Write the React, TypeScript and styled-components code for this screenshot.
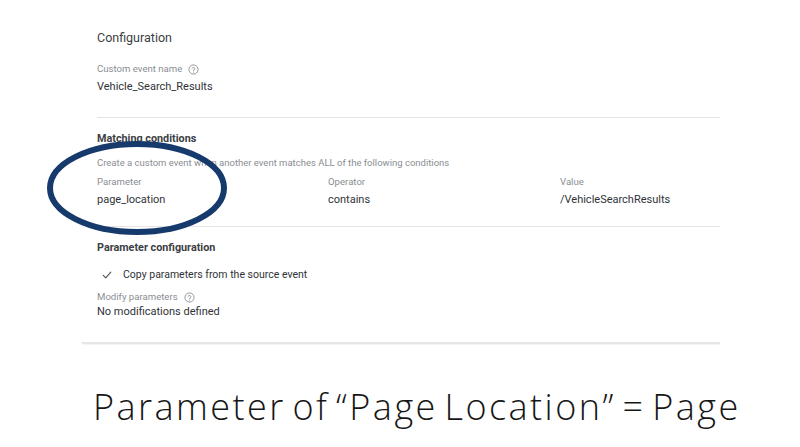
import React from "react";
import styled, { createGlobalStyle } from "styled-components";

const Global = createGlobalStyle`
  html, body { margin: 0; padding: 0; background: #ffffff; }
  body { width: 800px; height: 447px; overflow: hidden; font-family: Roboto, "Liberation Sans", Arial, sans-serif; }
`;

const Page = styled.div`
  position: relative;
  width: 800px;
  height: 447px;
  display: flex;
  flex-direction: column;
`;

const Card = styled.div`
  margin-left: 82px;
  width: 638px;
  padding: 30px 0 0 15px;
  box-sizing: border-box;
  border-bottom: 2px solid #e6e6e6;
  box-shadow: 0 1px 1px rgba(0,0,0,0.04);
`;

const Title = styled.div`
  font-size: 12.5px;
  line-height: 16px;
  color: #3c4043;
  margin-bottom: 17px;
`;

const Label = styled.div<{ $mt?: number }>`
  display: flex;
  align-items: center;
  gap: 6px;
  font-size: 9.6px;
  line-height: 12px;
  color: #8a8e93;
  margin-top: ${(p) => p.$mt ?? 0}px;
`;

const Value = styled.div<{ $mt?: number }>`
  font-size: 11px;
  line-height: 14px;
  color: #2f3337;
  margin-top: ${(p) => p.$mt ?? 0}px;
`;

const Section = styled.div<{ $pt: number; $pb: number; $line?: boolean }>`
  padding-top: ${(p) => p.$pt}px;
  padding-bottom: ${(p) => p.$pb}px;
  border-bottom: ${(p) => (p.$line ? "1px solid #e4e4e4" : "none")};
`;

const Heading = styled.div`
  font-size: 10.8px;
  line-height: 14px;
  font-weight: 700;
  color: #3c4043;
`;

const Desc = styled.div`
  font-size: 9.5px;
  line-height: 12px;
  color: #8a8e93;
  margin-top: 11px;
`;

const Grid = styled.div`
  display: grid;
  grid-template-columns: 231px 232px 1fr;
  margin-top: 7px;
`;

const Cell = styled.div`
  display: flex;
  flex-direction: column;
  gap: 5px;
`;

const CheckRow = styled.div`
  display: flex;
  align-items: center;
  gap: 11px;
  padding-left: 5px;
  margin-top: 13px;
  font-size: 10.5px;
  line-height: 14px;
  color: #2f3337;
`;

const Caption = styled.div`
  margin: 41px 0 0 93px;
  font-family: "Open Sans", Lato, sans-serif;
  font-weight: 300;
  font-size: 36px;
  line-height: 44px;
  letter-spacing: 2.45px;
  word-spacing: -5px;
  color: #161616;
  white-space: nowrap;
`;

const Circle = styled.svg`
  position: absolute;
  left: 45px;
  top: 140px;
  width: 184px;
  height: 98px;
  pointer-events: none;
`;

const Help = () => (
  <svg width="11" height="11" viewBox="0 0 24 24" fill="none">
    <circle cx="12" cy="12" r="10" stroke="#8a8e93" strokeWidth="2" />
    <path d="M9.2 9.3a2.9 2.9 0 0 1 5.6 1c0 1.9-2.8 2.4-2.8 4.2" stroke="#8a8e93" strokeWidth="2" strokeLinecap="round" />
    <circle cx="12" cy="17.6" r="1.2" fill="#8a8e93" />
  </svg>
);

const Check = () => (
  <svg width="10" height="10" viewBox="0 0 24 24" fill="none">
    <path d="M3 13l6 6L21 5" stroke="#4a4e52" strokeWidth="2.6" strokeLinecap="round" strokeLinejoin="round" />
  </svg>
);

export default function App() {
  return (
    <>
      <Global />
      <Page>
        <Card>
          <Title>Configuration</Title>
          <Label>Custom event name <Help /></Label>
          <Value $mt={5}>Vehicle_Search_Results</Value>
          <Section $pt={0} $pb={23} $line />
          <Section $pt={14} $pb={19} $line>
            <Heading>Matching conditions</Heading>
            <Desc>Create a custom event when another event matches ALL of the following conditions</Desc>
            <Grid>
              <Cell>
                <Label>Parameter</Label>
                <Value>page_location</Value>
              </Cell>
              <Cell>
                <Label>Operator</Label>
                <Value>contains</Value>
              </Cell>
              <Cell>
                <Label>Value</Label>
                <Value>/VehicleSearchResults</Value>
              </Cell>
            </Grid>
          </Section>
          <Section $pt={14} $pb={23}>
            <Heading>Parameter configuration</Heading>
            <CheckRow><Check />Copy parameters from the source event</CheckRow>
            <Label $mt={9}>Modify parameters <Help /></Label>
            <Value $mt={2}>No modifications defined</Value>
          </Section>
        </Card>
        <Caption>Parameter of “Page Location” = Page</Caption>
        <Circle viewBox="0 0 184 98">
          <ellipse cx="92" cy="48" rx="87" ry="44" fill="none" stroke="#173a6c" strokeWidth="6" />
        </Circle>
      </Page>
    </>
  );
}
